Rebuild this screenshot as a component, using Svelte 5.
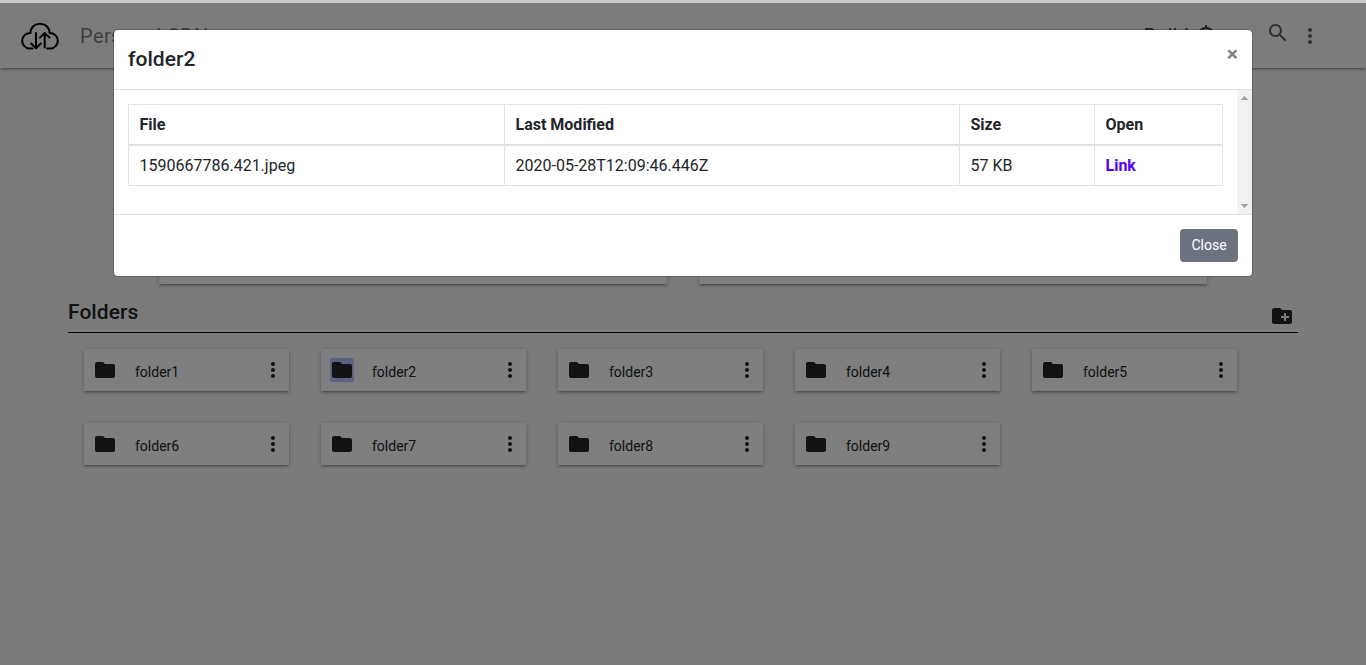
<script>
  const folders = Array.from({ length: 9 }, (_, i) => `folder${i + 1}`);
  const selected = 'folder2';
  const files = [
    { name: '1590667786.421.jpeg', modified: '2020-05-28T12:09:46.446Z', size: '57 KB' }
  ];
  const folderPath = 'M10 4H4c-1.1 0-1.99.9-1.99 2L2 18c0 1.1.9 2 2 2h16c1.1 0 2-.9 2-2V8c0-1.1-.9-2-2-2h-8l-2-2z';
  const morePath = 'M12 8c1.1 0 2-.9 2-2s-.9-2-2-2-2 .9-2 2 .9 2 2 2zm0 2c-1.1 0-2 .9-2 2s.9 2 2 2 2-.9 2-2-.9-2-2-2zm0 6c-1.1 0-2 .9-2 2s.9 2 2 2 2-.9 2-2-.9-2-2-2z';
</script>

<div class="page">
  <header class="navbar">
    <svg class="logo" viewBox="0 0 40 40" fill="none" stroke="#000" stroke-width="2" stroke-linecap="round" stroke-linejoin="round">
      <path d="M12.500 32.600H9.500A7.800 7.800 0 0 1 10.500 17C10.500 11.500 14.800 7.700 20 7.700s9.500 3.800 9.500 9.300A7.800 7.800 0 0 1 30.500 32.600H27.200" />
      <path d="M16 17v15M11.200 27.500l4.800 4.700 4.800-4.700M24.700 31.500V17M20 21.600l4.700-4.600 4.800 4.600" />
    </svg>
    <span class="brand">Personal CDN</span>
    <span class="build">Build</span>
    <svg class="status" viewBox="0 0 24 24"><path d="M20.940 11c-.46-4.170-3.770-7.480-7.940-7.940V1h-2v2.060C6.830 3.520 3.520 6.830 3.060 11H1v2h2.060c.46 4.170 3.770 7.480 7.940 7.940V23h2v-2.060c4.170-.46 7.480-3.770 7.940-7.940H23v-2h-2.060zM12 19c-3.870 0-7-3.130-7-7s3.130-7 7-7 7 3.130 7 7-3.130 7-7 7z" /></svg>
    <svg class="search" viewBox="0 0 24 24"><path d="M15.500 14h-.79l-.28-.27C15.410 12.590 16 11.110 16 9.500 16 5.910 13.090 3 9.500 3S3 5.910 3 9.500 5.910 16 9.500 16c1.610 0 3.090-.59 4.230-1.570l.27.28v.79l5 4.990L20.490 19l-4.990-5zm-6 0C7.010 14 5 11.990 5 9.500S7.010 5 9.500 5 14 7.010 14 9.500 11.990 14 9.500 14z" /></svg>
    <svg class="more" viewBox="0 0 24 24"><path d={morePath} /></svg>
  </header>

  <main>
    <section class="panels">
      <div class="card"></div>
      <div class="card"></div>
    </section>
    <div class="section-head">
      <h5>Folders</h5>
      <svg viewBox="0 0 24 24"><path d="M20 6h-8l-2-2H4c-1.110 0-1.990.89-1.990 2L2 18c0 1.110.89 2 2 2h16c1.110 0 2-.89 2-2V8c0-1.110-.89-2-2-2zm-1 8h-3v3h-2v-3h-3v-2h3V9h2v3h3v2z" /></svg>
    </div>
    <section class="folders">
      {#each folders as folder}
        <div class="card folder">
          <svg class:selected={folder === selected} viewBox="0 0 24 24"><path d={folderPath} /></svg>
          <span>{folder}</span>
          <svg viewBox="0 0 24 24"><path d={morePath} /></svg>
        </div>
      {/each}
    </section>
  </main>
</div>

<div class="backdrop">
  <div class="modal" role="dialog" aria-label={selected}>
    <div class="modal-header">
      <h5>{selected}</h5>
      <button class="dismiss">×</button>
    </div>
    <div class="modal-body">
      <div class="content">
        <table>
          <colgroup><col class="c1" /><col class="c2" /><col class="c3" /><col class="c4" /></colgroup>
          <thead><tr><th>File</th><th>Last Modified</th><th>Size</th><th>Open</th></tr></thead>
          <tbody>
            {#each files as file}
              <tr><td>{file.name}</td><td>{file.modified}</td><td>{file.size}</td><td><b>Link</b></td></tr>
            {/each}
          </tbody>
        </table>
      </div>
      <div class="scrollbar">
        <svg viewBox="0 0 7 4" shape-rendering="crispEdges"><path d="M3 0h1v1h1v1h1v1h1v1H0V3h1V2h1V1h1z" /></svg>
        <svg viewBox="0 0 7 4" shape-rendering="crispEdges"><path d="M0 0h7v1H6v1H5v1H4v1H3V3H2V2H1V1H0z" /></svg>
      </div>
    </div>
    <div class="modal-footer"><button class="close">Close</button></div>
  </div>
</div>

<style>
  :global(body) { margin: 0; overflow: hidden; }
  * { box-sizing: border-box; }
  .page {
    height: 665px;
    overflow: hidden;
    background: #f7f7f7;
    color: #212529;
    font-family: Roboto, sans-serif;
    font-size: 14px;
    border-top: 3px solid #ccc;
  }
  svg { display: block; width: 24px; height: 24px; fill: currentColor; flex: none; }
  h5 { margin: 0; font-size: 21px; line-height: 24px; font-weight: 500; letter-spacing: .05px; }
  .navbar {
    display: flex;
    align-items: center;
    height: 65px;
    padding: 0 44px 0 20px;
    color: rgba(0, 0, 0, .5);
    background: #f8f8f8;
    box-shadow: 0 2px 2px 0 rgba(0, 0, 0, .14), 0 3px 1px -2px rgba(0, 0, 0, .12), 0 1px 5px 0 rgba(0, 0, 0, .2);
  }
  .navbar .logo { width: 40px; height: 40px; fill: none; }
  .brand { margin-left: 20px; font-size: 20px; letter-spacing: .4px; }
  .build { margin-left: auto; font-size: 20px; color: #444; letter-spacing: .2px; }
  .status { margin-left: 5px; color: #444; }
  .search { margin: -5px 0 0 48px; color: #606060; }
  .more { margin-left: 8px; color: #606060; }
  main { padding: 0 68px; }
  .card {
    background: #fff;
    box-shadow: 0 2px 2px 0 rgba(0, 0, 0, .14), 0 3px 1px -2px rgba(0, 0, 0, .12), 0 1px 5px 0 rgba(0, 0, 0, .2);
  }
  .panels {
    display: grid;
    grid-template-columns: 508px 508px;
    gap: 32px;
    justify-content: center;
    padding-top: 32px;
    height: 216px;
  }
  .section-head {
    display: flex;
    justify-content: space-between;
    align-items: flex-start;
    height: 49px;
    padding: 16px 4px 0 0;
    border-bottom: 1px solid #000;
  }
  .section-head svg { margin-top: 4px; }
  .folders {
    display: grid;
    grid-template-columns: repeat(5, 205px);
    gap: 32px;
    padding: 16px;
  }
  .folder { display: flex; align-items: center; height: 42px; padding: 0 4px 0 9px; }
  .folder span { flex: 1; margin: 3px 0 0 18px; }
  .selected { background: #b8c4ff; border-radius: 2px; }
  .backdrop {
    position: absolute;
    inset: 3px 0 0;
    display: flex;
    justify-content: center;
    align-items: flex-start;
    padding-top: 26px;
    background: rgba(0, 0, 0, .5);
    color: #212529;
    font-family: Roboto, sans-serif;
  }
  .modal {
    width: 1140px;
    background: #fff;
    background-clip: padding-box;
    border: 1px solid rgba(0, 0, 0, .2);
    border-radius: 5px;
  }
  .modal-header {
    display: flex;
    justify-content: space-between;
    height: 60px;
    padding: 17px 14px 0;
    border-bottom: 1px solid #dee2e6;
  }
  button { font-family: inherit; border: 0; padding: 0; }
  .dismiss { align-self: flex-start; background: none; color: #7f7f7f; font-size: 21px; line-height: 21px; font-weight: 700; margin-top: -3px; }
  .modal-body { display: flex; height: 124px; }
  .content { flex: 1; padding: 14px; }
  table { width: 1095px; table-layout: fixed; border-collapse: collapse; font-size: 16px; line-height: 20px; }
  .c1 { width: 376px; }
  .c2 { width: 455px; }
  .c3 { width: 135px; }
  .c4 { width: 128px; }
  th, td { height: 41px; padding: 1px 10.500px 0; text-align: left; border: 1px solid #dee2e6; }
  thead th { height: 40px; border-bottom-width: 2px; font-weight: 700; }
  td b { color: #50e; font-weight: 700; }
  .scrollbar {
    display: flex;
    flex-direction: column;
    justify-content: space-between;
    align-items: center;
    width: 15px;
    padding: 6px 0;
    background: #f1f1f1;
  }
  .scrollbar svg { width: 7px; height: 4px; fill: #a3a3a3; }
  .modal-footer {
    display: flex;
    justify-content: flex-end;
    height: 62px;
    padding: 14px;
    border-top: 1px solid #dee2e6;
  }
  .close { width: 58px; height: 33px; padding-bottom: 2px; background: #6c727f; color: #fff; border-radius: 4px; font-size: 14px; }
</style>
